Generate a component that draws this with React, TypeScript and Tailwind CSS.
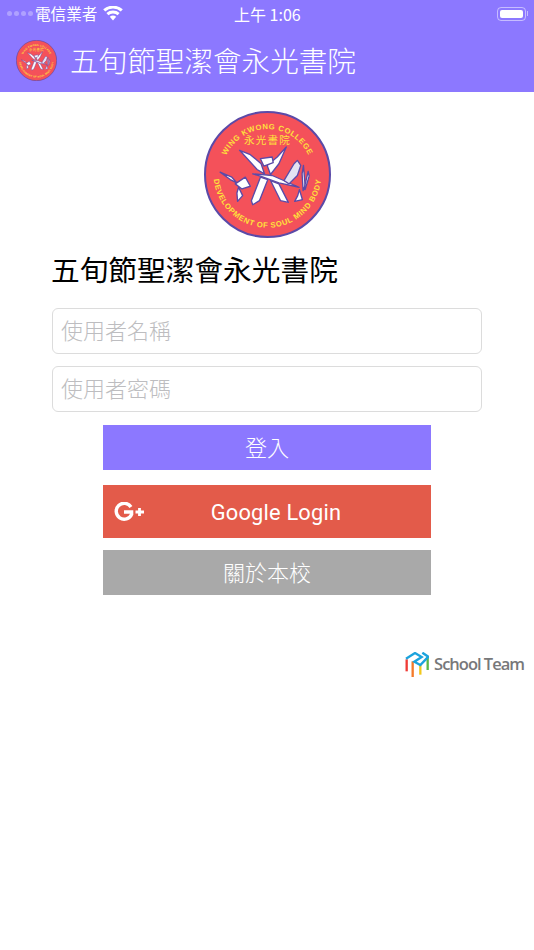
import * as React from "react";

const cjk = "font-['Noto_Sans_CJK_TC','Noto_Sans_CJK_JP',sans-serif]";

const CollegeLogo: React.FC<{ className?: string; id: string }> = ({ className, id }) => (
  <svg viewBox="0 0 126 126" className={className}>
    <defs>
      <path id={`${id}-top`} d="M 18 63 A 45 45 0 0 1 108 63" />
      <path id={`${id}-bottom`} d="M 10 55 A 53.5 53.5 0 1 0 116 55" />
    </defs>
    <circle cx="63" cy="63" r="62" fill="#f4515a" stroke="#5b4aa8" strokeWidth="2" />
    <text fill="#ffe23a" fontSize="7.6" fontWeight="700" letterSpacing="0.6" fontFamily="Liberation Sans, sans-serif">
      <textPath href={`#${id}-top`} startOffset="50%" textAnchor="middle">
        WING KWONG COLLEGE
      </textPath>
    </text>
    <text fill="#ffe23a" fontSize="7.6" fontWeight="700" letterSpacing="0.6" fontFamily="Liberation Sans, sans-serif">
      <textPath href={`#${id}-bottom`} startOffset="50%" textAnchor="middle">
        DEVELOPMENT OF SOUL MIND BODY
      </textPath>
    </text>
    <text x="63" y="33" textAnchor="middle" fill="#ffe23a" fontSize="10.5" letterSpacing="1.2" fontFamily="Noto Sans CJK TC, sans-serif">
      永光書院
    </text>
    {/* figures, drawn in 3x crop coordinates */}
    <g transform="translate(-9 -6) scale(0.3333)" fill="#ffffff" stroke="#5b4aa8" strokeWidth="4" strokeLinejoin="round">
      <path d="M133 135 L165 148 L197 175 L207 205 L185 192 Z" />
      <path d="M272 125 L250 175 L225 207 L215 180 L245 155 Z" />
      <path d="M195 160 L230 155 L233 172 L205 182 Z" />
      <path d="M195 215 L217 222 L192 285 L172 297 L168 285 Z" />
      <path d="M225 225 L250 235 L278 290 L255 285 Z" />
      <path d="M172 205 L230 210 L310 245 L250 232 L195 212 Z" />
      <path d="M265 225 L295 175 L305 165 L315 180 L305 210 L280 235 Z" fill="#e4e2f2" />
      <path d="M75 200 L110 215 L125 232 L105 222 Z" />
      <path d="M120 235 L150 215 L165 242 L140 250 Z" />
      <path d="M130 245 L142 270 L127 287 L125 262 Z" />
      <path d="M323 180 L328 240 L322 255 L319 205 Z" />
      <path d="M337 198 L340 212 L328 252 L325 250 Z" />
      <path d="M311 252 L320 282 L297 287 L306 270 Z" />
    </g>
  </svg>
);

const StatusBar = () => (
  <div className="relative flex h-[27px] items-center justify-between pl-[7px] pr-[6px] text-white">
    <div className="flex items-center">
      <div className="flex gap-[2px] opacity-30">
        <span className="h-[5px] w-[5px] rounded-full bg-white" />
        <span className="h-[5px] w-[5px] rounded-full bg-white" />
        <span className="h-[5px] w-[5px] rounded-full bg-white" />
        <span className="h-[5px] w-[5px] rounded-full bg-white" />
      </div>
      <span className="ml-[2px] text-[15.6px] leading-none">電信業者</span>
      <svg viewBox="0 0 20 15" className="ml-[6px] h-[15px] w-[20px]" fill="#fff">
        <path d="M10 14.5 L6.8 10.8 A5 5 0 0 1 13.2 10.8 Z" />
        <path d="M5.4 9.2 L3.4 6.9 A10 10 0 0 1 16.6 6.9 L14.6 9.2 A7 7 0 0 0 5.4 9.2 Z" />
        <path d="M2.2 5.5 L0.2 3.3 A15 15 0 0 1 19.8 3.3 L17.8 5.5 A12 12 0 0 0 2.2 5.5 Z" />
      </svg>
    </div>
    <span className="absolute left-[234px] text-[16px] leading-none">上午 1:06</span>
    <div className="flex items-center">
      <div className="h-[14px] w-[29px] rounded-[4px] border border-white/50 p-[2px]">
        <div className="h-full w-full rounded-[2px] bg-white" />
      </div>
      <div className="ml-[1px] h-[5px] w-[1px] bg-white/50" />
    </div>
  </div>
);

const TextField: React.FC<{ placeholder: string }> = ({ placeholder }) => (
  <div className="flex h-[46px] items-center rounded-[6px] border border-[#dcdcdc] bg-white px-[8px] pb-[3px] text-[22px] font-light text-[#bdbdc0]">
    {placeholder}
  </div>
);

export default function App() {
  return (
    <div className={`relative min-h-[950px] w-[534px] bg-white ${cjk}`}>
      <header className="h-[92px] bg-[#8c78ff]">
        <StatusBar />
        <div className="flex items-center pl-[16px] pt-[13px]">
          <CollegeLogo id="bar" className="h-[41px] w-[41px]" />
          <h1 className="ml-[13px] text-[28.6px] leading-none font-light text-white">五旬節聖潔會永光書院</h1>
        </div>
      </header>

      <main className="flex flex-col items-center pt-[19px]">
        <CollegeLogo id="main" className="h-[127px] w-[127px]" />
        <div className="mt-[13px] w-full px-[51px]">
          <h2 className="text-[28.7px] leading-[36px] font-normal text-black">五旬節聖潔會永光書院</h2>
          <div className="mt-[21px] ml-[1px] mr-[1px] flex flex-col gap-[12px]">
            <TextField placeholder="使用者名稱" />
            <TextField placeholder="使用者密碼" />
          </div>
        </div>
        <div className="mt-[13px] flex w-[328px] flex-col text-white">
          <button className="h-[45px] bg-[#8c78ff] pb-[2px] text-[22px] font-light">登入</button>
          <button className="relative mt-[15px] flex h-[53px] items-center justify-center bg-[#e35b4a] pl-[18px] pt-[4px] font-['Roboto',sans-serif] text-[21.8px] tracking-[0.2px]">
            <svg viewBox="0 0 32 20" className="absolute left-[10px] top-[17px] h-[20px] w-[32px]" fill="none">
              <path d="M18 5 A8 8 0 1 0 18.6 12.4 L18.6 10 L11 10" stroke="#fff" strokeWidth="3.4" />
              <path d="M26.5 6 V14 M22.5 10 H31" stroke="#fff" strokeWidth="2.8" />
            </svg>
            Google Login
          </button>
          <button className="mt-[12px] h-[45px] bg-[#a9a9a9] pb-[2px] text-[22px] font-light">關於本校</button>
        </div>
        <div className="mt-[57px] flex w-full items-center justify-end pr-[10px]">
          <svg viewBox="0 0 72 75" className="h-[25px] w-[24px]" fill="none" strokeWidth="7" strokeLinejoin="miter">
            <path d="M5 22 V58" stroke="#ef3b36" />
            <path d="M23 28 V75" stroke="#f47a2a" />
            <path d="M46 38 V68" stroke="#f2c81c" />
            <path d="M68 14 V54" stroke="#5cb947" />
            <path d="M3 20 L30 3 L50 15 L28 29 L46 39 L70 14 L52 2" stroke="#1ba3dd" />
          </svg>
          <span className="ml-[5px] font-['Open_Sans',sans-serif] text-[16.5px] font-semibold tracking-[-1px] text-[#77787a]">School Team</span>
        </div>
      </main>
    </div>
  );
}
